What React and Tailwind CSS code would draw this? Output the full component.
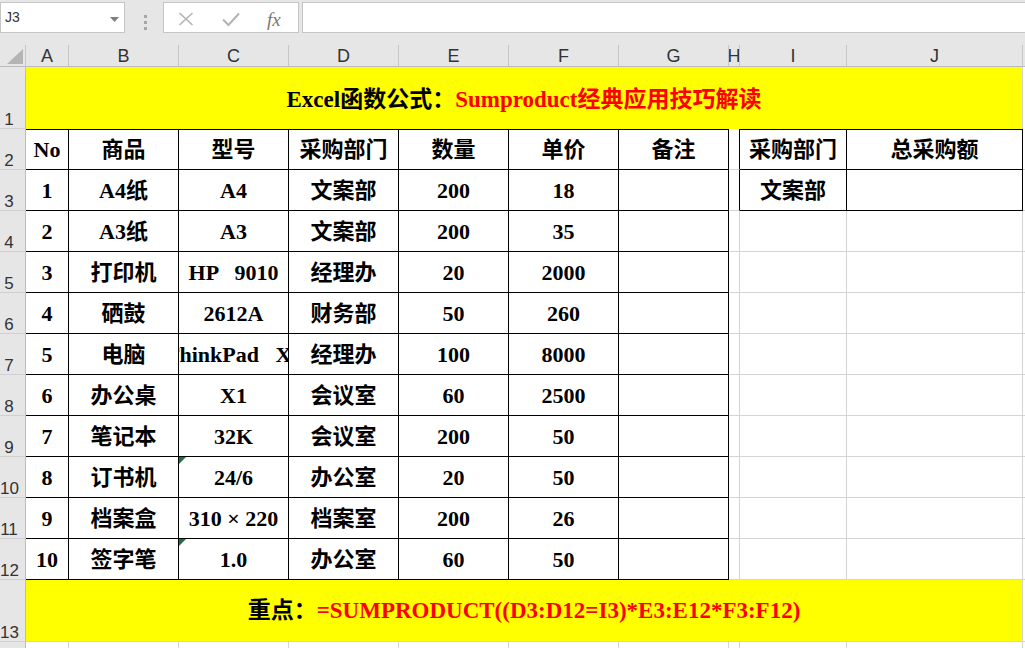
import React from "react";

const CELL_FONT = "font-['Liberation_Serif','Noto_Sans_CJK_SC',serif] font-bold text-[22px]";
const BAND_FONT = "font-['Liberation_Serif','Noto_Sans_CJK_SC',serif] font-bold text-[23px]";
const HDR_FONT = "font-['Liberation_Sans_Narrow','Liberation_Sans',sans-serif] text-[#333333]";

const data = [
  ["No", "商品", "型号", "采购部门", "数量", "单价", "备注"],
  ["1", "A4纸", "A4", "文案部", "200", "18", ""],
  ["2", "A3纸", "A3", "文案部", "200", "35", ""],
  ["3", "打印机", "HP   9010", "经理办", "20", "2000", ""],
  ["4", "硒鼓", "2612A", "财务部", "50", "260", ""],
  ["5", "电脑", "ThinkPad   X1", "经理办", "100", "8000", ""],
  ["6", "办公桌", "X1", "会议室", "60", "2500", ""],
  ["7", "笔记本", "32K", "会议室", "200", "50", ""],
  ["8", "订书机", "24/6", "办公室", "20", "50", ""],
  ["9", "档案盒", "310 × 220", "档案室", "200", "26", ""],
  ["10", "签字笔", "1.0", "办公室", "60", "50", ""],
];

const ij = [
  ["采购部门", "总采购额"],
  ["文案部", ""],
];

const letters = ["A", "B", "C", "D", "E", "F", "G", "H", "I", "J"];

function RowHeader({ label }) {
  return (
    <div className="flex items-end overflow-hidden border-r border-b border-r-[#bcbcbc] border-b-[#d0d0d0] bg-[#e6e6e6]">
      <div className={`w-[18px] text-center text-[17px] leading-[17px] ${HDR_FONT}`}>{label}</div>
    </div>
  );
}

function GreenMark() {
  return (
    <div className="absolute left-0 top-0 h-0 w-0 border-t-[7px] border-r-[7px] border-t-[#1e7145] border-r-transparent" />
  );
}

function TopBar() {
  return (
    <div className="flex h-[45px] bg-[#e6e6e6]">
      <div className="relative mt-[2px] flex h-[31px] w-[125px] items-center border border-[#c6c6c6] bg-white pl-[4px] font-['Liberation_Sans',sans-serif] text-[14px] text-[#333333]">
        J3
        <svg className="absolute left-[109px] top-[14px]" width="9" height="5" viewBox="0 0 9 5">
          <polygon points="0,0 9,0 4.5,5" fill="#7f7f7f" />
        </svg>
      </div>
      <div className="flex w-[38px] flex-col items-center justify-center gap-[3px] pl-[2px]">
        <div className="h-[3px] w-[3px] bg-[#a6a6a6]" />
        <div className="h-[3px] w-[3px] bg-[#a6a6a6]" />
        <div className="h-[3px] w-[3px] bg-[#a6a6a6]" />
      </div>
      <div className="relative mt-[2px] h-[31px] w-[136px] border border-[#c6c6c6] bg-white">
        <svg className="absolute left-[14px] top-[9px]" width="16" height="14" viewBox="0 0 16 14">
          <path d="M1.5 1 L14.5 13 M14.5 1 L1.5 13" stroke="#b3b3b3" strokeWidth="1.6" fill="none" />
        </svg>
        <svg className="absolute left-[58px] top-[9px]" width="18" height="15" viewBox="0 0 18 15">
          <path d="M1 7.5 L6.5 13 L17 1.5" stroke="#b3b3b3" strokeWidth="2" fill="none" />
        </svg>
        <div className="absolute left-[103px] top-[3px] font-['Liberation_Serif',serif] text-[19px] italic text-[#777777]">
          fx
        </div>
      </div>
      <div className="ml-[3px] mt-[2px] h-[31px] flex-1 border border-r-0 border-[#c6c6c6] bg-white" />
    </div>
  );
}

export default function App() {
  const cells = [];

  // Column header row
  cells.push(
    <div key="corner" className="relative border-r border-b border-r-[#c6c6c6] border-b-[#bcbcbc] bg-[#e6e6e6]">
      <svg className="absolute left-[7px] top-[4px]" width="16" height="15" viewBox="0 0 16 15">
        <polygon points="16,0 16,15 0,15" fill="#b4b4b4" />
      </svg>
    </div>
  );
  letters.forEach((l) => {
    cells.push(
      <div
        key={"h" + l}
        className={`flex items-end justify-center overflow-hidden border-r border-b border-r-[#c6c6c6] border-b-[#bcbcbc] bg-[#e6e6e6] text-[18px] leading-[18px] ${HDR_FONT}`}
      >
        <span className="pb-[1px]">{l}</span>
      </div>
    );
  });
  cells.push(<div key="hrest" className="border-b border-b-[#bcbcbc] bg-[#e6e6e6]" />);

  // Row 1 title
  cells.push(<RowHeader key="r1" label="1" />);
  cells.push(
    <div
      key="title"
      className={`col-span-10 flex items-center justify-center border-r border-r-[#d4d4d4] bg-[#ffff00] pt-[5px] ${BAND_FONT}`}
    >
      <span className="text-black">Excel函数公式：</span>
      <span className="text-[#ff0000]">Sumproduct经典应用技巧解读</span>
    </div>
  );
  cells.push(<div key="rest1" className="bg-white" />);

  // Rows 2..12
  data.forEach((row, i) => {
    cells.push(<RowHeader key={"rh" + i} label={String(i + 2)} />);
    row.forEach((txt, c) => {
      const top = i === 0 ? " border-t border-t-black" : "";
      const mark = c === 2 && (i === 8 || i === 10);
      cells.push(
        <div
          key={`c${i}-${c}`}
          className={`relative flex items-center justify-center overflow-hidden border-r border-b border-r-black border-b-black bg-white text-black ${CELL_FONT}${top}`}
        >
          {mark && <GreenMark />}
          <span className="shrink-0 whitespace-pre">{txt}</span>
        </div>
      );
    });
    // H
    cells.push(
      <div
        key={"H" + i}
        className={
          i <= 1
            ? "border-r border-b border-r-black border-b-[#d4d4d4] bg-white"
            : "border-r border-b border-r-[#d4d4d4] border-b-[#d4d4d4] bg-white"
        }
      />
    );
    // I, J
    [0, 1].forEach((k) => {
      let cls;
      if (i === 0) cls = "border-t border-r border-b border-t-black border-r-black border-b-black";
      else if (i === 1) cls = "border-r border-b border-r-black border-b-black";
      else cls = "border-r border-b border-r-[#d4d4d4] border-b-[#d4d4d4]";
      const txt = i <= 1 ? ij[i][k] : "";
      cells.push(
        <div
          key={`ij${i}-${k}`}
          className={`flex items-center justify-center overflow-hidden bg-white text-black ${CELL_FONT} ${cls}`}
        >
          <span className="shrink-0 whitespace-pre">{txt}</span>
        </div>
      );
    });
    cells.push(<div key={"rest" + i} className="border-b border-b-[#d4d4d4] bg-white" />);
  });

  // Row 13
  cells.push(<RowHeader key="r13" label="13" />);
  cells.push(
    <div
      key="formula"
      className={`col-span-10 flex items-center justify-center border-r border-b border-r-[#d4d4d4] border-b-[#d4d4d4] bg-[#ffff00] pt-[1px] ${BAND_FONT}`}
    >
      <span className="text-black">重点：</span>
      <span className="text-[#ff0000]">=SUMPRODUCT((D3:D12=I3)*E3:E12*F3:F12)</span>
    </div>
  );
  cells.push(<div key="rest13" className="border-b border-b-[#d4d4d4] bg-white" />);

  // Row 14 (only its top few pixels are visible)
  cells.push(<RowHeader key="r14" label="" />);
  letters.forEach((l) => {
    cells.push(<div key={"r14" + l} className="border-r border-r-[#d4d4d4] bg-white" />);
  });
  cells.push(<div key="rest14" className="bg-white" />);

  return (
    <div className="h-[648px] w-[1025px] overflow-hidden bg-white">
      <TopBar />
      <div className="grid grid-cols-[26px_43px_110px_110px_110px_110px_110px_110px_11px_107px_176px_1fr] grid-rows-[22px_62px_41px_41px_41px_41px_41px_41px_41px_41px_41px_41px_41px_62px_30px]">
        {cells}
      </div>
    </div>
  );
}
